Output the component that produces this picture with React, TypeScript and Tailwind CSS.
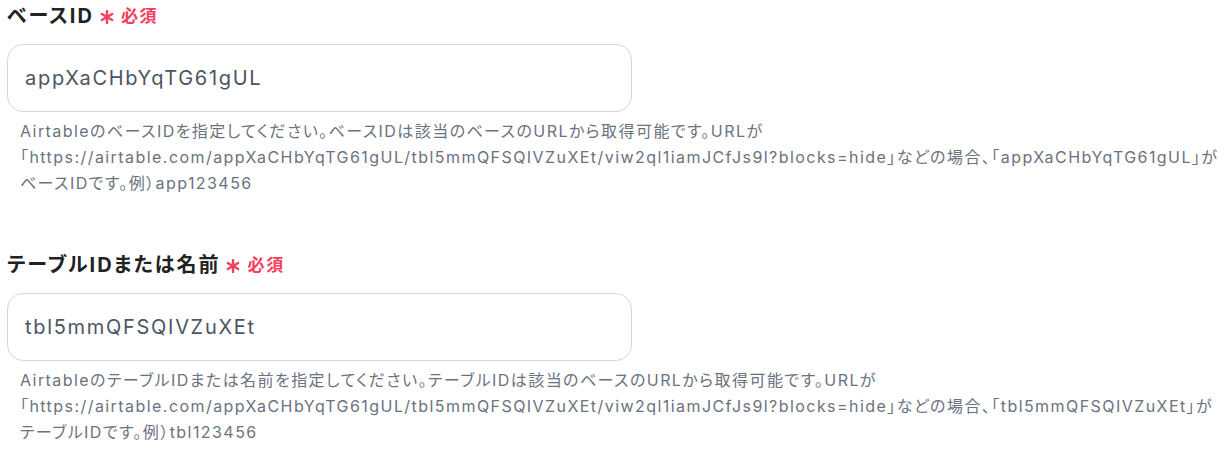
import React from 'react';

const fieldFont = { fontFamily: 'Inter, "Noto Sans CJK JP", sans-serif' };

const RequiredMark: React.FC = () => (
  <span className="ml-[6px] inline-flex items-center gap-[7px] text-[17px] font-bold tracking-[0.1em] text-[#f43f5e]">
    <svg width="14" height="14" viewBox="0 0 14 14" className="mt-[2px]">
      <g stroke="#f43f5e" strokeWidth="2.4" strokeLinecap="round">
        <line x1="7" y1="1" x2="7" y2="13" />
        <line x1="1.8" y1="4" x2="12.2" y2="10" />
        <line x1="1.8" y1="10" x2="12.2" y2="4" />
      </g>
    </svg>
    必須
  </span>
);

type FieldProps = {
  label: string;
  value: string;
  help: string;
};

const Field: React.FC<FieldProps> = ({ label, value, help }) => (
  <div>
    <div className="flex items-center pt-[2px] text-[20px] font-bold leading-[28px] tracking-[0.1em] text-[#222]">
      {label}
      <RequiredMark />
    </div>
    <div className="mt-[14px] flex h-[68px] w-[625px] items-center rounded-2xl border border-[#d4d8de] bg-white px-[17px] text-[20px] tracking-[0.085em] text-[#4b5563]">
      {value}
    </div>
    <p className="mt-[6px] pl-[13px] text-[16px] leading-[26px] tracking-[0.09em] text-[#6b7280]">{help}</p>
  </div>
);

const App: React.FC = () => {
  const url = 'https://airtable.com/appXaCHbYqTG61gUL/tbl5mmQFSQIVZuXEt/viw2ql1iamJCfJs9l?blocks=hide';

  return (
    <div className="min-h-[450px] bg-white pl-[7px] [font-feature-settings:'palt']" style={fieldFont}>
      <Field
        label="ベースID"
        value="appXaCHbYqTG61gUL"
        help={`AirtableのベースIDを指定してください。ベースIDは該当のベースのURLから取得可能です。URLが「${url}」などの場合、「appXaCHbYqTG61gUL」がベースIDです。例）app123456`}
      />
      <div className="mt-[53px]">
        <Field
          label="テーブルIDまたは名前"
          value="tbl5mmQFSQIVZuXEt"
          help={`AirtableのテーブルIDまたは名前を指定してください。テーブルIDは該当のベースのURLから取得可能です。URLが「${url}」などの場合、「tbl5mmQFSQIVZuXEt」がテーブルIDです。例）tbl123456`}
        />
      </div>
    </div>
  );
};

export default App;
